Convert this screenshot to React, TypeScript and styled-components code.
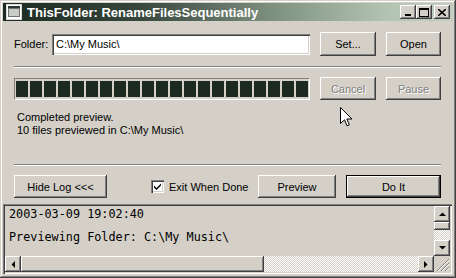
import styled, { createGlobalStyle } from "styled-components";

const GlobalStyle = createGlobalStyle`
  html, body {
    margin: 0;
    padding: 0;
    background: #d4d0c8;
  }
  body {
    width: 456px;
    height: 278px;
    overflow: hidden;
    font-family: "Liberation Sans", Arial, sans-serif;
    font-size: 11px;
    color: #000;
  }
`;

const raised = `
  background: #d4d0c8;
  box-shadow: inset -1px -1px #404040, inset 1px 1px #fff,
    inset -2px -2px #808080, inset 2px 2px #d4d0c8;
`;

const sunken = `
  box-shadow: inset 1px 1px #808080, inset 2px 2px #404040,
    inset -1px -1px #fff, inset -2px -2px #d4d0c8;
`;

const Window = styled.div`
  position: relative;
  width: 456px;
  height: 278px;
  box-sizing: border-box;
  padding: 3px;
  background: #d4d0c8;
  box-shadow: inset -1px -1px #404040, inset 1px 1px #d4d0c8,
    inset -2px -2px #808080, inset 2px 2px #fff;
  display: flex;
  flex-direction: column;
`;

const TitleBar = styled.div`
  height: 18px;
  display: flex;
  align-items: center;
  padding: 0 3px 0 3px;
  background: linear-gradient(
    to right,
    #1c2a22 0%,
    #36463b 30%,
    #7e917f 60%,
    #b3c3b1 85%,
    #c2cfc0 100%
  );
  color: #fff;
  font-weight: bold;
  font-size: 13px;
`;

const TitleText = styled.span`
  flex: 1;
  margin-left: 5px;
  white-space: nowrap;
`;

const CaptionButton = styled.div<{ $gap?: number }>`
  ${raised}
  width: 16px;
  height: 14px;
  margin-left: ${(p) => p.$gap ?? 0}px;
  display: flex;
  align-items: center;
  justify-content: center;
`;

const Body = styled.div`
  display: flex;
  flex-direction: column;
  padding: 0 12px 0 11px;
`;

const Row = styled.div<{ $top: number; $h: number }>`
  display: flex;
  align-items: center;
  margin-top: ${(p) => p.$top}px;
  height: ${(p) => p.$h}px;
`;

const Label = styled.span`
  width: 38px;
`;

const TextInput = styled.div`
  ${sunken}
  flex: 1;
  height: 21px;
  background: #fff;
  box-sizing: border-box;
  padding: 4px 4px;
  white-space: nowrap;
`;

const Button = styled.div<{ $w: number; $gap?: number; $disabled?: boolean; $default?: boolean }>`
  ${raised}
  width: ${(p) => p.$w}px;
  height: 100%;
  margin-left: ${(p) => p.$gap ?? 0}px;
  box-sizing: border-box;
  display: flex;
  align-items: center;
  justify-content: center;
  color: ${(p) => (p.$disabled ? "#808080" : "#000")};
  text-shadow: ${(p) => (p.$disabled ? "1px 1px #fff" : "none")};
  ${(p) =>
    p.$default &&
    `box-shadow: inset 0 0 0 1px #000, inset -2px -2px #404040, inset 2px 2px #fff,
      inset -3px -3px #808080;`}
`;

const Separator = styled.div<{ $top: number }>`
  margin-top: ${(p) => p.$top}px;
  border-top: 1px solid #808080;
  border-bottom: 1px solid #fff;
`;

const Progress = styled.div`
  flex: 1;
  height: 22px;
  box-sizing: border-box;
  border: 1px solid;
  border-color: #808080 #fff #fff #808080;
  padding: 2px 1px;
  display: flex;
  gap: 2px;
`;

const Block = styled.div`
  flex: 1;
  background: #1c2a22;
`;

const Status = styled.div`
  margin-top: 11px;
  padding-left: 3px;
  line-height: 13px;
`;

const CheckLabel = styled.label`
  display: flex;
  align-items: center;
  margin-left: 44px;
  width: 107px;
`;

const CheckBox = styled.div`
  ${sunken}
  width: 13px;
  height: 13px;
  background: #fff;
  margin-right: 5px;
  display: flex;
  align-items: center;
  justify-content: center;
`;

const LogBox = styled.div`
  margin: 6px 1px 0 0;
  height: 70px;
  box-sizing: border-box;
  padding: 2px;
  box-shadow: inset 1px 1px #808080, inset 2px 2px #404040,
    inset -1px -1px #fff, inset -2px -2px #d4d0c8;
  display: flex;
  flex-direction: column;
`;

const LogMain = styled.div`
  flex: 1;
  display: flex;
  min-height: 0;
`;

const LogText = styled.pre`
  flex: 1;
  margin: 0;
  padding: 3px 0 0 4px;
  font-family: "DejaVu Sans Mono", monospace;
  font-size: 11.8px;
  line-height: 11.5px;
  overflow: hidden;
`;

const VScroll = styled.div`
  width: 16px;
  display: flex;
  flex-direction: column;
`;

const HScroll = styled.div`
  height: 16px;
  display: flex;
`;

const ArrowButton = styled.div`
  ${raised}
  width: 16px;
  height: 16px;
  flex-shrink: 0;
  display: flex;
  align-items: center;
  justify-content: center;
`;

const Thumb = styled.div<{ $w?: number; $h?: number }>`
  ${raised}
  width: ${(p) => (p.$w ? `${p.$w}px` : "auto")};
  height: ${(p) => (p.$h ? `${p.$h}px` : "auto")};
  flex-shrink: 0;
`;

const Track = styled.div`
  flex: 1;
  background-color: #fff;
  background-image: conic-gradient(#d4d0c8 25%, #fff 0 50%, #d4d0c8 0 75%, #fff 0);
  background-size: 2px 2px;
`;

const Grip = styled.div`
  width: 16px;
  height: 16px;
  background: #d4d0c8;
`;

const Pointer = styled.svg`
  position: absolute;
  left: 340px;
  top: 107px;
`;

const Tri = ({ dir }: { dir: "up" | "down" | "left" | "right" }) => {
  const pts = {
    up: "0,4 7,4 3.5,0.5",
    down: "0,0 7,0 3.5,3.5",
    left: "4,0 4,7 0.5,3.5",
    right: "0,0 0,7 3.5,3.5",
  }[dir];
  const vertical = dir === "up" || dir === "down";
  return (
    <svg width={vertical ? 7 : 4} height={vertical ? 4 : 7}>
      <polygon points={pts} fill="#000" />
    </svg>
  );
};

export default function App() {
  return (
    <>
      <GlobalStyle />
      <Window>
        <TitleBar>
          <svg width="16" height="16" viewBox="0 0 16 16">
            <rect x="0.5" y="0.5" width="15" height="15" fill="#fff" stroke="#d8d8d8" />
            <rect x="2" y="4" width="12" height="9" fill="#6e746e" />
            <rect x="2" y="2" width="12" height="2" fill="#2c3430" />
            <rect x="3" y="5" width="10" height="7" fill="#c9cbc6" />
          </svg>
          <TitleText>ThisFolder: RenameFilesSequentially</TitleText>
          <CaptionButton>
            <svg width="8" height="8">
              <rect x="1" y="6" width="6" height="2" fill="#000" />
            </svg>
          </CaptionButton>
          <CaptionButton>
            <svg width="10" height="9">
              <rect x="0.5" y="0.5" width="9" height="8" fill="none" stroke="#000" />
              <rect x="0" y="0" width="10" height="2" fill="#000" />
            </svg>
          </CaptionButton>
          <CaptionButton $gap={2}>
            <svg width="8" height="7">
              <path d="M0 0 L8 7 M8 0 L0 7" stroke="#000" strokeWidth="1.6" />
            </svg>
          </CaptionButton>
        </TitleBar>

        <Body>
          <Row $top={11} $h={24}>
            <Label>Folder:</Label>
            <TextInput>C:\My Music\</TextInput>
            <Button $w={56} $gap={10}>Set...</Button>
            <Button $w={55} $gap={10}>Open</Button>
          </Row>

          <Separator $top={10} />

          <Row $top={9} $h={23}>
            <Progress>
              {Array.from({ length: 21 }).map((_, i) => (
                <Block key={i} />
              ))}
            </Progress>
            <Button $w={56} $gap={10} $disabled>Cancel</Button>
            <Button $w={55} $gap={10} $disabled>Pause</Button>
          </Row>

          <Status>
            Completed preview.
            <br />
            10 files previewed in C:\My Music\
          </Status>

          <Separator $top={27} />

          <Row $top={9} $h={23}>
            <Button $w={93}>Hide Log &lt;&lt;&lt;</Button>
            <CheckLabel>
              <CheckBox>
                <svg width="7" height="7">
                  <path d="M0 2.5 L2.5 5 L7 0.5 L7 2.5 L2.5 7 L0 4.5 Z" fill="#000" />
                </svg>
              </CheckBox>
              Exit When Done
            </CheckLabel>
            <Button $w={78}>Preview</Button>
            <Button $w={95} $gap={10} $default>Do It</Button>
          </Row>
        </Body>

        <LogBox>
          <LogMain>
            <LogText>{"2003-03-09 19:02:40\n\nPreviewing Folder: C:\\My Music\\"}</LogText>
            <VScroll>
              <ArrowButton>
                <Tri dir="up" />
              </ArrowButton>
              <Thumb $h={8} />
              <Track />
              <ArrowButton>
                <Tri dir="down" />
              </ArrowButton>
            </VScroll>
          </LogMain>
          <HScroll>
            <ArrowButton>
              <Tri dir="left" />
            </ArrowButton>
            <Thumb $w={243} />
            <Track />
            <ArrowButton>
              <Tri dir="right" />
            </ArrowButton>
            <Grip>
              <svg width="16" height="16">
                <path d="M15 3 L3 15 M15 7 L7 15 M15 11 L11 15" stroke="#808080" />
                <path d="M15 4 L4 15 M15 8 L8 15 M15 12 L12 15" stroke="#fff" />
              </svg>
            </Grip>
          </HScroll>
        </LogBox>

        <Pointer width="13" height="21" viewBox="0 0 13 21">
          <path
            d="M0.5 0.5 L0.5 16.5 L4.5 12.8 L7 18.8 L9.3 17.8 L6.9 12 L12 12 Z"
            fill="#fff"
            stroke="#000"
            strokeLinejoin="miter"
          />
        </Pointer>
      </Window>
    </>
  );
}
